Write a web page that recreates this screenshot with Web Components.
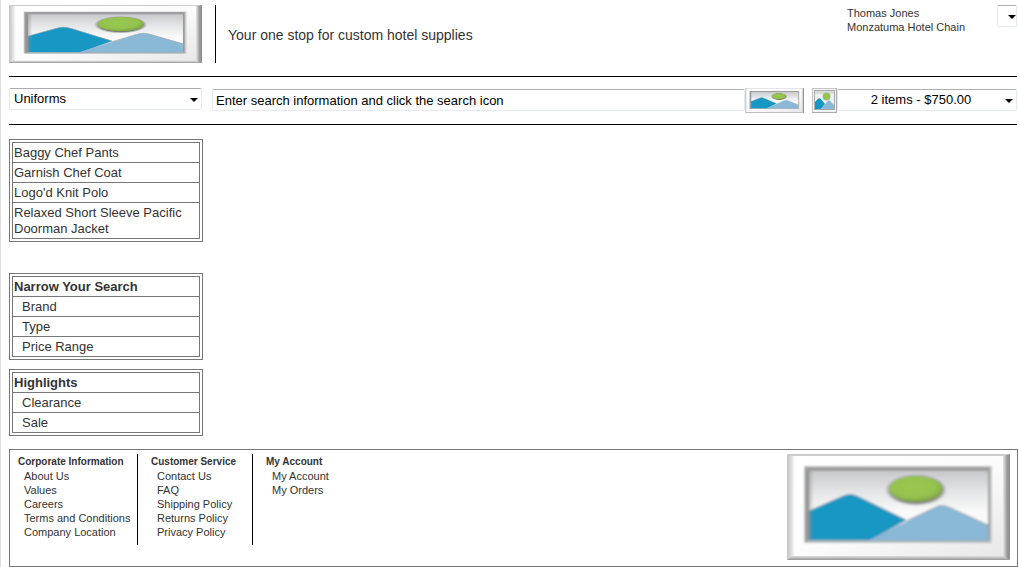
<!DOCTYPE html>
<html lang="en">
<head>
<meta charset="utf-8">
<title>Hotel Supplies</title>
<style>
  html { background: #fff; }
  body {
    margin: 0;
    min-height: 100vh;
    box-sizing: border-box;
    border-left: 1px solid #ddd;
    font: 13px/16px "Liberation Sans", Arial, sans-serif;
    color: #333;
  }
</style>
</head>
<body>
<supply-page></supply-page>
<script>
function define(name, html, setup) {
  const template = document.createElement('template');
  template.innerHTML = html;
  customElements.define(name, class extends HTMLElement {
    constructor() {
      super();
      this.attachShadow({ mode: 'open' }).append(template.content.cloneNode(true));
    }
    connectedCallback() {
      if (setup) setup(this, this.shadowRoot);
    }
  });
}

/* Framed landscape; stretches to the box of its host. */
define('framed-picture', `
  <style>
    :host { display: block; }
    svg { display: block; width: 100%; height: 100%; }
  </style>
  <svg viewBox="0 0 223 106" preserveAspectRatio="none" aria-hidden="true">
    <defs>
      <filter id="soft" x="-5%" y="-5%" width="110%" height="110%"><feGaussianBlur stdDeviation=".8"/></filter>
      <linearGradient id="mat" x1="0" y1="0" x2="1" y2="1">
        <stop offset="0" stop-color="#fff"/><stop offset=".5" stop-color="#fcfcfc"/><stop offset="1" stop-color="#e6e6e6"/>
      </linearGradient>
      <linearGradient id="right" x1="0" x2="1" y1="0" y2="0">
        <stop offset="0" stop-color="#e8e8e8"/><stop offset=".6" stop-color="#999"/><stop offset="1" stop-color="#8c8c8c"/>
      </linearGradient>
      <linearGradient id="left" x1="0" x2="1" y1="0" y2="0">
        <stop offset="0" stop-color="#c4c4c4"/><stop offset=".4" stop-color="#d6d6d6"/><stop offset="1" stop-color="#fff"/>
      </linearGradient>
      <linearGradient id="bottom" x1="0" x2="0" y1="0" y2="1">
        <stop offset="0" stop-color="#e0e0e0"/><stop offset="1" stop-color="#969696"/>
      </linearGradient>
      <linearGradient id="sky" x1="0" x2="0" y1="0" y2="1">
        <stop offset="0" stop-color="#c8c9cc"/><stop offset=".3" stop-color="#e4e5e6"/><stop offset=".6" stop-color="#fafafa"/>
      </linearGradient>
      <linearGradient id="shade" x1="0" x2="1" y1="0" y2="0">
        <stop offset="0" stop-color="#888" stop-opacity=".7"/><stop offset="1" stop-color="#999" stop-opacity="0"/>
      </linearGradient>
      <radialGradient id="sun" cx=".45" cy=".4" r=".6">
        <stop offset="0" stop-color="#99c851"/><stop offset=".7" stop-color="#94c24f"/><stop offset="1" stop-color="#7ea345"/>
      </radialGradient>
      <radialGradient id="halo">
        <stop offset=".8" stop-color="#777"/><stop offset="1" stop-color="#999" stop-opacity="0"/>
      </radialGradient>
    </defs>
    <rect width="223" height="106" fill="url(#mat)"/>
    <rect width="8" height="106" fill="url(#left)"/>
    <path d="M0 0H223L219 2H3Z" fill="#ccc"/>
    <path d="M0 106L5 102H218L223 106Z" fill="url(#bottom)"/>
    <path d="M216 2L223 0V106L216 102Z" fill="url(#right)"/>
    <g filter="url(#soft)">
      <rect x="17" y="12" width="188" height="77" fill="#ccc"/>
      <rect x="18" y="13" width="185" height="75" fill="#9c9c9c"/>
      <rect x="22" y="17" width="179" height="69" fill="url(#sky)"/>
      <ellipse cx="129" cy="36" rx="31" ry="16" fill="url(#halo)"/>
      <ellipse cx="129" cy="35" rx="27" ry="13" fill="url(#sun)"/>
      <path d="M22 57L54 43Q63 38 72 43L119 66L82 87H22Z" fill="#1397c4" stroke="#7d9fae" stroke-width="1"/>
      <path d="M80 87L147 54Q155 49 164 54L201 71V87Z" fill="#8ab8d7"/>
      <path d="M119 67L147 54Q155 49 164 54L201 71" fill="none" stroke="#a0a8ad" stroke-width="1"/>
      <rect x="20" y="17" width="7" height="69" fill="url(#shade)"/>
      <path d="M20 86H203V88H20Z" fill="#a3b2ba"/>
    </g>
  </svg>`);

/* Small square thumbnail of the same landscape. */
define('picture-thumb', `
  <style>
    :host { display: block; }
    svg { display: block; width: 100%; height: 100%; }
  </style>
  <svg viewBox="0 0 25 25" aria-hidden="true">
    <rect width="25" height="25" fill="#c4c4c4"/>
    <path d="M1 1H24V24H1Z" fill="#f3f3f3"/>
    <path d="M24 0H25V25H0V24H24Z" fill="#aaa"/>
    <rect x="2" y="2" width="21" height="20" fill="#aaa"/>
    <rect x="3" y="3" width="19" height="18" fill="#eff0f1"/>
    <path d="M3 3H22V6H3Z" fill="#d8dadc"/>
    <circle cx="14.5" cy="8.5" r="4" fill="#a9b99a"/>
    <circle cx="14.5" cy="8.3" r="3.3" fill="#93c24d"/>
    <path d="M3 14L6.3 10.6Q7.3 9.8 8.3 10.6L13 16L9 21H3Z" fill="#1397c4"/>
    <path d="M9 21L16 12.7Q17 11.8 18 12.7L22 17V21Z" fill="#8ab8d7"/>
  </svg>`);

define('select-box', `
  <style>
    :host { display: grid; grid-template-columns: minmax(0, 1fr); height: 22px; }
    select, svg { grid-area: 1 / 1; }
    select {
      appearance: none;
      box-sizing: border-box;
      width: 100%;
      height: 100%;
      min-width: 0;
      margin: 0;
      padding: 0 16px 0 4px;
      border: 1px solid #e3e9ef;
      border-top-color: #abadb3;
      border-radius: 2px;
      background: #fff;
      color: #000;
      font: 13px/16px "Liberation Sans", Arial, sans-serif;
    }
    :host([centered]) select { text-align-last: center; }
    svg { justify-self: end; align-self: center; margin: 2px 4px 0 0; pointer-events: none; }
    :host([compact]) select { padding: 0; }
    :host([compact]) svg { margin-right: 1px; }
  </style>
  <select><option></option></select>
  <svg width="8" height="4" viewBox="0 0 8 4" aria-hidden="true"><path d="M0 0H8L4 4Z" fill="#000"/></svg>`,
  (host, root) => {
    const select = root.querySelector('select');
    select.setAttribute('aria-label', host.getAttribute('label'));
    select.options[0].textContent = host.getAttribute('value') || '';
  });

define('site-header', `
  <style>
    :host { display: flex; align-items: flex-start; padding-bottom: 13px; border-bottom: 1px solid #000; }
    framed-picture { width: 193px; height: 58px; flex: none; }
    p { margin: 0; }
    .tagline {
      flex: 1;
      box-sizing: border-box;
      height: 58px;
      margin-left: 13px;
      padding-left: 12px;
      border-left: 1px solid #000;
      font-size: 14px;
      line-height: 60px;
    }
    .account { width: 150px; padding-top: 1px; font-size: 11px; line-height: 14px; }
    select-box { width: 20px; }
  </style>
  <framed-picture role="img" aria-label="Company logo"></framed-picture>
  <p class="tagline">Your one stop for custom hotel supplies</p>
  <div class="account"><p>Thomas Jones</p><p>Monzatuma Hotel Chain</p></div>
  <select-box compact label="Account menu"></select-box>`);

define('search-bar', `
  <style>
    :host { display: flex; align-items: flex-start; padding: 11px 0; border-bottom: 1px solid #000; }
    .category { width: 193px; margin-right: 10px; }
    input {
      flex: 1;
      min-width: 0;
      box-sizing: border-box;
      height: 22px;
      margin: 1px 0 0;
      padding: 0 3px;
      border: 1px solid #e3e9ef;
      border-top-color: #abadb3;
      border-radius: 2px;
      background: #fff;
      color: #000;
      font: 13px/16px "Liberation Sans", Arial, sans-serif;
    }
    button { flex: none; margin: 0 8px 0 0; padding: 0; border: 0; background: none; cursor: pointer; }
    button framed-picture { width: 59px; height: 25px; }
    picture-thumb { width: 25px; height: 25px; flex: none; }
    .cart { width: 180px; margin-top: 1px; }
  </style>
  <select-box class="category" label="Category" value="Uniforms"></select-box>
  <input type="text" aria-label="Search" value="Enter search information and click the search icon">
  <button type="button" aria-label="Search"><framed-picture></framed-picture></button>
  <picture-thumb role="img" aria-label="Cart"></picture-thumb>
  <select-box class="cart" centered label="Cart contents" value="2 items - $750.00"></select-box>`);

/* Double-ruled list of links with an optional heading row. */
define('link-panel', `
  <style>
    :host { display: block; padding: 2px; border: 1px solid #777; }
    .rows { border: 1px solid #777; }
    h2, ::slotted(a) {
      display: block;
      margin: 0;
      padding: 2px 1px 1px;
      font-size: 13px;
      line-height: 16px;
      color: #333;
      text-decoration: none;
    }
    ::slotted(a:not(:first-of-type)) { border-top: 1px solid #777; }
    :host([heading]) ::slotted(a) { padding-left: 9px; }
    h2 { border-bottom: 1px solid #777; }
    h2:empty { display: none; }
  </style>
  <nav class="rows"><h2></h2><slot></slot></nav>`,
  (host, root) => {
    root.querySelector('h2').textContent = host.getAttribute('heading') || '';
  });

define('footer-column', `
  <style>
    :host { display: block; box-sizing: border-box; min-height: 91px; padding-left: 13px; font-size: 11px; line-height: 14px; white-space: nowrap; }
    h3 { margin: 0; font-size: 10px; line-height: 14px; padding-top: 1px; }
    ::slotted(a) { display: block; margin-left: 6px; color: #333; text-decoration: none; }
  </style>
  <h3></h3><slot></slot>`,
  (host, root) => {
    root.querySelector('h3').textContent = host.getAttribute('heading');
  });

define('site-footer', `
  <style>
    :host { display: flex; align-items: flex-start; padding: 4px 7px 6px 0; border: 1px solid #777; }
    footer-column { flex: none; }
    footer-column:not(:last-of-type) { border-right: 1px solid #000; }
    .corporate { width: 128px; padding-left: 8px; }
    .service { width: 115px; }
    framed-picture { width: 223px; height: 106px; flex: none; margin-left: auto; }
  </style>
  <footer-column class="corporate" heading="Corporate Information">
    <a href="#">About Us</a><a href="#">Values</a><a href="#">Careers</a><a href="#">Terms and Conditions</a><a href="#">Company Location</a>
  </footer-column>
  <footer-column class="service" heading="Customer Service">
    <a href="#">Contact Us</a><a href="#">FAQ</a><a href="#">Shipping Policy</a><a href="#">Returns Policy</a><a href="#">Privacy Policy</a>
  </footer-column>
  <footer-column heading="My Account">
    <a href="#">My Account</a><a href="#">My Orders</a>
  </footer-column>
  <framed-picture role="img" aria-label="Landscape"></framed-picture>`);

define('supply-page', `
  <style>
    :host { display: block; padding: 5px 2px 0 8px; }
    main { width: 194px; padding: 14px 0 13px; }
    link-panel { margin-bottom: 9px; }
    .products { margin-bottom: 31px; }
    link-panel:last-child { margin-bottom: 0; }
    site-footer { margin-right: -1px; }
  </style>
  <site-header></site-header>
  <search-bar></search-bar>
  <main>
    <link-panel class="products">
      <a href="#">Baggy Chef Pants</a><a href="#">Garnish Chef Coat</a><a href="#">Logo'd Knit Polo</a><a href="#">Relaxed Short Sleeve Pacific Doorman Jacket</a>
    </link-panel>
    <link-panel heading="Narrow Your Search">
      <a href="#">Brand</a><a href="#">Type</a><a href="#">Price Range</a>
    </link-panel>
    <link-panel heading="Highlights">
      <a href="#">Clearance</a><a href="#">Sale</a>
    </link-panel>
  </main>
  <site-footer></site-footer>`);
</script>
</body>
</html>
